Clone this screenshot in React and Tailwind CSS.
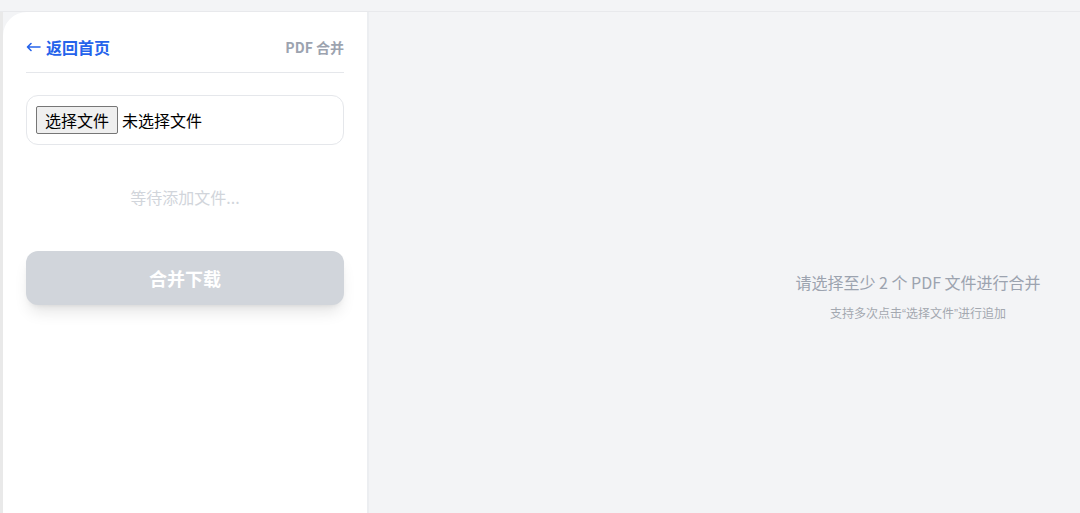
export default function App() {
  const font = { fontFamily: '"Noto Sans CJK SC", "Noto Sans", sans-serif' };
  return (
    <div className="h-[513px] w-[1080px] overflow-hidden bg-[#f3f4f6] pt-[11px]" style={font}>
      <div className="flex h-full border-t border-[#e8e9ec]">
        <div className="w-[3px] shrink-0 bg-[#e9e9e9]" />
        <aside className="w-[366px] shrink-0 rounded-tl-[24px] border-r-2 border-[#eceef1] bg-white px-[23px] pt-[23px]">
          <div className="flex h-[38px] items-start justify-between border-b border-[#e5e7eb]">
            <span className="flex h-6 items-center gap-[5px] text-base font-bold leading-6 text-[#2563eb]">
              <svg width="15" height="10" viewBox="0 0 15 10" fill="none" stroke="#2563eb" strokeWidth="1.6" strokeLinecap="round" strokeLinejoin="round">
                <path d="M14 5H1.5M5 1.5L1.5 5L5 8.5" />
              </svg>
              返回首页
            </span>
            <span className="text-sm font-bold leading-6 text-[#9ca3af]">PDF 合并</span>
          </div>
          <div className="mt-[22px] flex items-center rounded-xl border border-[#e5e7eb] px-[9px] py-[10px]">
            <span className="rounded-[2px] border border-[#767676] bg-[#efefef] px-[8px] text-base leading-[26px] text-black">选择文件</span>
            <span className="ml-[4px] text-base leading-[26px] text-black">未选择文件</span>
          </div>
          <div className="mt-[40px] text-center text-base leading-6 text-[#d1d5db]">等待添加文件...</div>
          <div className="mt-[42px] rounded-xl bg-[#d1d5db] py-[13px] text-center text-lg font-bold leading-7 text-white shadow-lg">合并下载</div>
        </aside>
        <main className="flex-1 overflow-hidden">
          <div className="flex w-[1098px] flex-col items-center pt-[258px]">
            <div className="text-base leading-6 text-[#9ca3af]">请选择至少 2 个 PDF 文件进行合并</div>
            <div className="mt-[11px] text-xs leading-4 text-[#a3a8b0]">
              支持多次点击<span className="font-['Liberation_Sans',sans-serif]">“</span>选择文件<span className="font-['Liberation_Sans',sans-serif]">”</span>进行追加
            </div>
          </div>
        </main>
      </div>
    </div>
  );
}
